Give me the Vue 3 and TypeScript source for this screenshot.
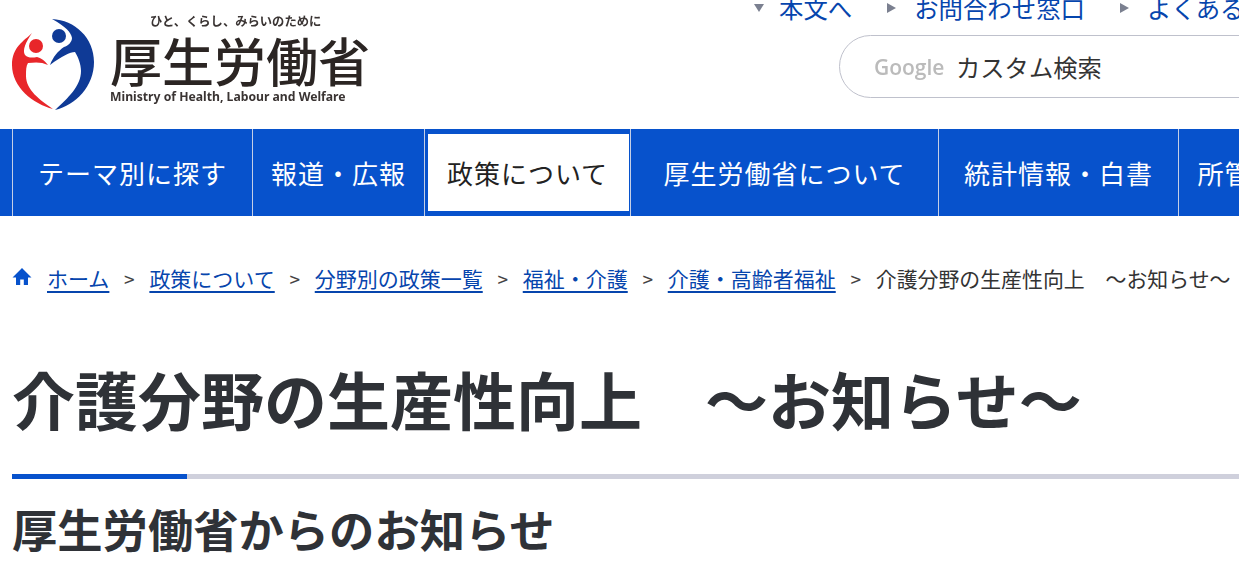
<template>
  <div class="page">
    <header class="header">
      <a class="logo">
        <svg class="logo-mark" viewBox="12 18 84 93" width="84" height="93">
          <path fill="#0f3a96" d="M52 19C75 20 94 38 94 62C94 86 76 105 55 110C68 98 81 86 81 71C81 64 78 57 75 52C70 52 62 56 50 65C53 57 58 51 64 47C68 46 72 42 72 38C71 32 66 27 52 19Z" />
          <circle fill="#0f3a96" cx="59" cy="36" r="7" />
          <path fill="#e8262a" d="M32 33C24 41 12 47 12 65C12 87 33 104 53 109C40 100 26 90 26 76C26 70 26 66 28 63C36 62 42 62 48 65C44 60 41 58 37 57C32 58 28 58 25 55C22 50 26 42 32 33Z" />
          <circle fill="#e8262a" cx="36" cy="46" r="7" />
        </svg>
        <div class="logo-text">
          <div class="logo-tag">ひと、くらし、みらいのために</div>
          <div class="logo-name">厚生労働省</div>
          <div class="logo-en">Ministry of Health, Labour and Welfare</div>
        </div>
      </a>
      <div class="header-right">
        <ul class="util">
          <li v-for="(u, i) in utils" :key="u" :class="{ first: i === 0 }">
            <span class="tri" :class="{ down: i === 0 }"></span>{{ u }}
          </li>
        </ul>
        <div class="search">
          <span class="google">Google</span>
          <span class="search-label">カスタム検索</span>
        </div>
      </div>
    </header>

    <nav class="gnav">
      <a v-for="n in nav" :key="n.label" class="gnav-item" :class="{ active: n.active }" :style="{ width: n.width + 'px' }">
        <span>{{ n.label }}</span>
      </a>
    </nav>

    <div class="crumbs">
      <svg class="home" viewBox="0 0 20 20" width="20" height="20">
        <path fill="#0752cc" d="M10 1L0.5 10.5H4V18H8.2V12.5H11.8V18H16V10.5H19.5Z" />
      </svg>
      <template v-for="c in crumbs" :key="c">
        <a class="crumb-link">{{ c }}</a>
        <span class="sep">&gt;</span>
      </template>
      <span class="crumb-now">介護分野の生産性向上　～お知らせ～</span>
    </div>

    <h1 class="title">介護分野の生産性向上　～お知らせ～</h1>
    <div class="rule"><span></span></div>
    <h2 class="sub">厚生労働省からのお知らせ</h2>
  </div>
</template>

<script setup lang="ts">
const utils = ['本文へ', 'お問合わせ窓口', 'よくあるご質問']

const nav = [
  { label: 'テーマ別に探す', width: 240 },
  { label: '報道・広報', width: 172 },
  { label: '政策について', width: 206, active: true },
  { label: '厚生労働省について', width: 308 },
  { label: '統計情報・白書', width: 240 },
  { label: '所管の法令等', width: 200 }
]

const crumbs = ['ホーム', '政策について', '分野別の政策一覧', '福祉・介護', '介護・高齢者福祉']
</script>

<style>
html, body {
  margin: 0;
  background: #fff;
  overflow: hidden;
}
</style>

<style scoped>
.page {
  width: 1239px;
  height: 566px;
  overflow: hidden;
  font-family: "Noto Sans CJK JP", "Noto Sans", sans-serif;
  color: #333;
}
.header {
  height: 129px;
  display: flex;
  overflow: hidden;
}
.logo {
  display: flex;
  margin-left: 12px;
  padding-top: 18px;
  filter: blur(0.4px);
}
.logo-mark {
  flex: none;
}
.logo-text {
  margin-left: 14px;
  margin-top: -6px;
  width: 262px;
  color: #2b2523;
}
.logo-tag {
  font-size: 12.3px;
  font-weight: 700;
  line-height: 18px;
  padding-left: 40px;
  color: #3a3433;
}
.logo-name {
  font-size: 52px;
  line-height: 60px;
  font-weight: 500;
  letter-spacing: 0;
  white-space: nowrap;
}
.logo-en {
  font-family: "Noto Sans", sans-serif;
  font-size: 12.2px;
  font-weight: 700;
  line-height: 14px;
  white-space: nowrap;
  color: #3a3433;
}
.header-right {
  margin-left: 467px;
  flex: none;
  width: 500px;
}
.util {
  list-style: none;
  margin: -18px 0 0;
  padding: 0;
  display: flex;
  height: 35px;
  font-size: 24.4px;
  line-height: 36px;
  color: #0645ad;
  white-space: nowrap;
  margin-top: -10px;
}
.util li {
  display: flex;
  align-items: center;
  margin-right: 35px;
}
.util li.first {
  margin-left: -85px;
}
.tri {
  width: 0;
  height: 0;
  border-style: solid;
  border-width: 5px 0 5px 9px;
  border-color: transparent transparent transparent #7b8090;
  margin-right: 18px;
}
.tri.down {
  border-width: 8px 5px 0 5px;
  border-color: #7b8090 transparent transparent transparent;
  margin-right: 15px;
}
.search {
  box-sizing: border-box;
  height: 63px;
  width: 600px;
  margin-top: 10px;
  border: 1px solid #bfc1cc;
  border-radius: 32px;
  display: flex;
  align-items: center;
  padding-left: 34px;
}
.google {
  font-family: "Open Sans", sans-serif;
  font-size: 21px;
  font-weight: 600;
  color: #bbb;
  filter: blur(0.6px);
  width: 82px;
  flex: none;
}
.search-label {
  font-size: 24.3px;
  color: #333;
  white-space: nowrap;
}
.gnav {
  height: 87px;
  background: #0752cc;
  display: flex;
  padding-left: 12px;
}
.gnav-item {
  box-sizing: border-box;
  flex: none;
  border-left: 1px solid #c5cfe6;
  color: #fff;
  font-size: 26px;
  letter-spacing: 1px;
  display: flex;
  align-items: center;
  justify-content: center;
  white-space: nowrap;
}
.gnav-item.active {
  color: #222;
  position: relative;
}
.gnav-item.active span {
  position: relative;
}
.gnav-item.active::before {
  content: "";
  position: absolute;
  inset: 5px 1px 5px 3px;
  background: #fff;
}
.crumbs {
  margin-top: 47px;
  padding-left: 12px;
  display: flex;
  align-items: center;
  height: 30px;
  font-size: 21px;
  white-space: nowrap;
}
.home {
  margin-right: 15px;
  margin-top: -3px;
  flex: none;
}
.crumb-link {
  color: #0645ad;
  text-decoration: underline;
  text-underline-offset: 4px;
}
.sep {
  width: 40px;
  text-align: center;
  color: #444;
  font-size: 19px;
}
.crumb-now {
  color: #333;
  font-size: 20.9px;
}
.title {
  margin: 59px 0 0 12px;
  font-size: 63px;
  font-weight: 700;
  line-height: 92px;
  color: #2f3237;
  white-space: nowrap;
}
.rule {
  height: 5px;
  margin: 30px 0 0 12px;
  background: #cfd0dc;
}
.rule span {
  display: block;
  width: 175px;
  height: 5px;
  background: #0752cc;
}
.sub {
  margin: 16px 0 0 12px;
  font-size: 45.3px;
  font-weight: 700;
  line-height: 66px;
  color: #2f3237;
  white-space: nowrap;
}
</style>
